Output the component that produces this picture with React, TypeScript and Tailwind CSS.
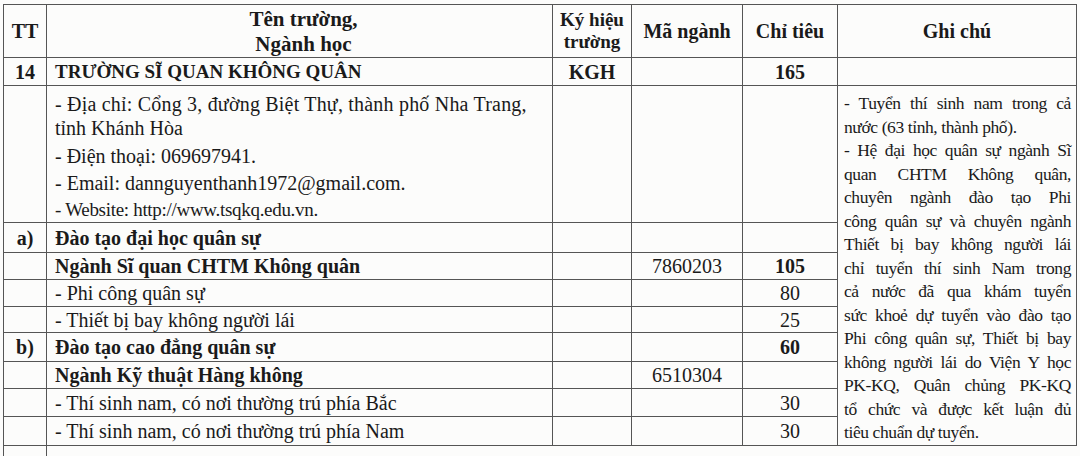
const serif = "font-['Liberation_Serif','Times_New_Roman',serif]";

const cell = "border border-[#555] p-0";

const notes: { t: string; j: boolean }[] = [
  { t: "- Tuyển thí sinh nam trong cả", j: true },
  { t: "nước (63 tỉnh, thành phố).", j: false },
  { t: "- Hệ đại học quân sự ngành Sĩ", j: true },
  { t: "quan CHTM Không quân,", j: true },
  { t: "chuyên ngành đào tạo Phi", j: true },
  { t: "công quân sự và chuyên ngành", j: true },
  { t: "Thiết bị bay không người lái", j: true },
  { t: "chỉ tuyển thí sinh Nam trong", j: true },
  { t: "cả nước đã qua khám tuyển", j: true },
  { t: "sức khoẻ dự tuyển vào đào tạo", j: true },
  { t: "Phi công quân sự, Thiết bị bay", j: true },
  { t: "không người lái do Viện Y học", j: true },
  { t: "PK-KQ, Quân chủng PK-KQ", j: true },
  { t: "tổ chức và được kết luận đủ", j: true },
  { t: "tiêu chuẩn dự tuyển.", j: false },
];

type Row = {
  h: string;
  tt?: string;
  name: string;
  bold?: boolean;
  ma?: string;
  ct?: string;
  ctBold?: boolean;
};

const rows: Row[] = [
  { h: "h-[30px]", tt: "a)", name: "Đào tạo đại học quân sự", bold: true },
  { h: "h-[27px]", name: "Ngành Sĩ quan CHTM Không quân", bold: true, ma: "7860203", ct: "105", ctBold: true },
  { h: "h-[27px]", name: "- Phi công quân sự", ct: "80" },
  { h: "h-[26px]", name: "- Thiết bị bay không người lái", ct: "25" },
  { h: "h-[29px]", tt: "b)", name: "Đào tạo cao đẳng quân sự", bold: true, ct: "60", ctBold: true },
  { h: "h-[27px]", name: "Ngành Kỹ thuật Hàng không", bold: true, ma: "6510304" },
  { h: "h-[28px]", name: "- Thí sinh nam, có nơi thường trú phía Bắc", ct: "30" },
  { h: "h-[29px]", name: "- Thí sinh nam, có nơi thường trú phía Nam", ct: "30" },
];

export default function App() {
  return (
    <div className={`w-[1080px] h-[456px] overflow-hidden bg-[#fcfcfb] pt-[4px] pl-[3px] text-[#1a1a1a] ${serif}`}>
      <table className="table-fixed border-collapse w-[1073px] text-[20px] leading-[22px]">
        <colgroup>
          <col className="w-[43px]" />
          <col className="w-[506px]" />
          <col className="w-[79px]" />
          <col className="w-[111px]" />
          <col className="w-[95px]" />
          <col className="w-[239px]" />
        </colgroup>
        <tbody>
          {/* Header */}
          <tr className="h-[53px] font-bold">
            <td className={`${cell} text-center`}>TT</td>
            <td className={`${cell} text-center text-[21px] pl-[8px]`}>
              <div>Tên trường,</div>
              <div className="mt-[3px]">Ngành học</div>
            </td>
            <td className={`${cell} text-center text-[19px] leading-[22px]`}>
              <div>Ký hiệu</div>
              <div>trường</div>
            </td>
            <td className={`${cell} text-center text-[20px]`}>Mã ngành</td>
            <td className={`${cell} text-center`}>Chỉ tiêu</td>
            <td className={`${cell} text-center`}>Ghi chú</td>
          </tr>

          {/* School row */}
          <tr className="h-[28px] font-bold">
            <td className={`${cell} text-center`}>14</td>
            <td className={`${cell} pl-[8px] text-[19px]`}>TRƯỜNG SĨ QUAN KHÔNG QUÂN</td>
            <td className={`${cell} text-center`}>KGH</td>
            <td className={cell}></td>
            <td className={`${cell} text-center`}>165</td>
            <td className={cell}></td>
          </tr>

          {/* Info row */}
          <tr className="h-[137px]">
            <td className={cell}></td>
            <td className={`${cell} align-top pl-[8px] pt-[6px] leading-[24px]`}>
              <div className="tracking-[0.2px]">- Địa chỉ: Cổng 3, đường Biệt Thự, thành phố Nha Trang,</div>
              <div>tỉnh Khánh Hòa</div>
              <div className="mt-[4px]">- Điện thoại: 069697941.</div>
              <div className="mt-[3px]">- Email: dannguyenthanh1972@gmail.com.</div>
              <div className="mt-[3px] text-[19px] tracking-[-0.3px]">- Website: http://www.tsqkq.edu.vn.</div>
            </td>
            <td className={cell}></td>
            <td className={cell}></td>
            <td className={cell}></td>
            <td rowSpan={9} className={`${cell} align-top pl-[6px] pr-[5px] pt-[6px]`}>
              {notes.map((n, i) => (
                <div
                  key={i}
                  className={`text-[17.5px] leading-[23.5px] tracking-[-0.4px] ${
                    n.j ? "text-justify [text-align-last:justify]" : "text-left"
                  }`}
                >
                  {n.t}
                </div>
              ))}
            </td>
          </tr>

          {rows.map((r, i) => (
            <tr key={i} className={r.h}>
              <td className={`${cell} text-center font-bold`}>{r.tt}</td>
              <td className={`${cell} pl-[8px] ${r.bold ? "font-bold" : ""}`}>{r.name}</td>
              <td className={cell}></td>
              <td className={`${cell} text-center`}>{r.ma}</td>
              <td className={`${cell} text-center ${r.ctBold ? "font-bold" : ""}`}>{r.ct}</td>
            </tr>
          ))}

          {/* Partial row cut off at the bottom */}
          <tr className="h-[24px]">
            <td className="border-l border-r border-[#555] p-0"></td>
            <td className="p-0"></td>
            <td className="p-0"></td>
            <td className="p-0"></td>
            <td className="p-0"></td>
            <td className="p-0"></td>
          </tr>
        </tbody>
      </table>
    </div>
  );
}
